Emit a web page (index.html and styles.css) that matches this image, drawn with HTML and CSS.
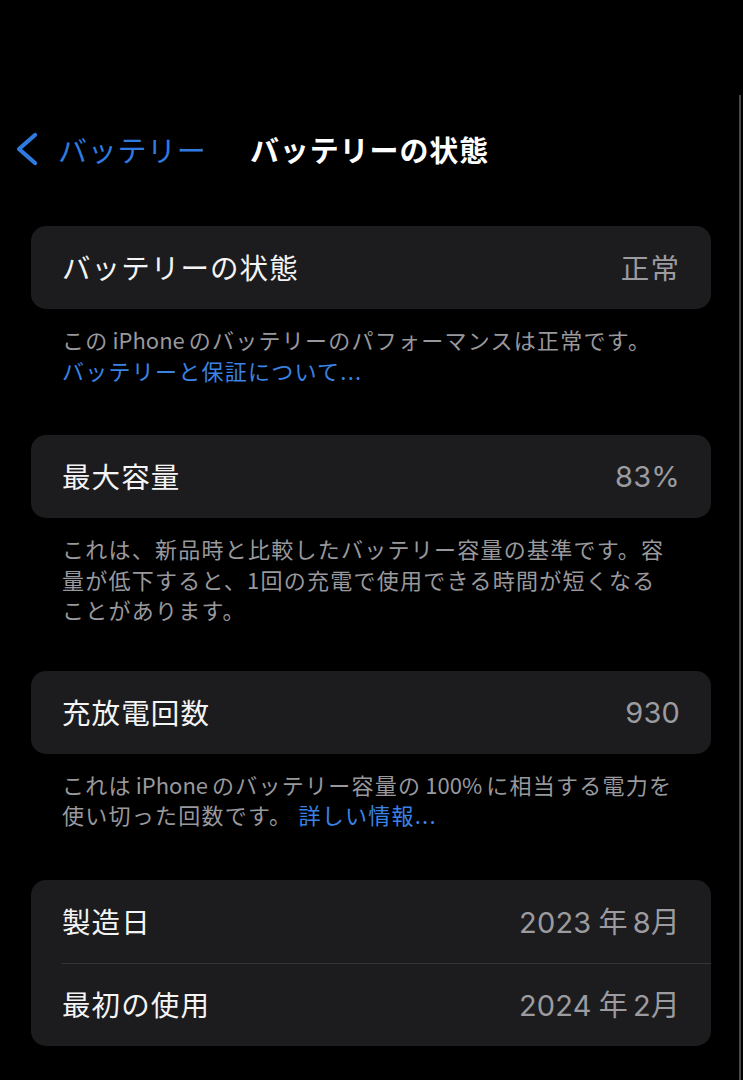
FILE: index.html
```html
<!DOCTYPE html>
<html lang="ja">
<head>
<meta charset="utf-8">
<title>バッテリーの状態</title>
<link rel="stylesheet" href="styles.css">
</head>
<body>
<div class="screen">
  <header class="nav">
    <a class="back" href="#">
      <svg class="chevron" width="26" height="34" viewBox="0 0 26 34" aria-hidden="true">
        <path d="M21 3 L5 17 L21 31" fill="none" stroke="currentColor" stroke-width="4.2" stroke-linecap="round" stroke-linejoin="round"/>
      </svg>
      <span class="back-label">バッテリー</span>
    </a>
    <h1 class="nav-title">バッテリーの状態</h1>
    <span class="nav-spacer"></span>
  </header>

  <main class="content">
    <section class="group">
      <div class="card">
        <div class="row"><span class="label">バッテリーの状態</span><span class="value">正常</span></div>
      </div>
      <p class="footer">この<span class="latin">iPhone</span>のバッテリーのパフォーマンスは正常です。<br><a class="link" href="#">バッテリーと保証について...</a></p>
    </section>

    <section class="group">
      <div class="card">
        <div class="row"><span class="label">最大容量</span><span class="value num">83%</span></div>
      </div>
      <p class="footer">これは、新品時と比較したバッテリー容量の基準です。容<br>量が低下すると、1回の充電で使用できる時間が短くなる<br>ことがあります。</p>
    </section>

    <section class="group">
      <div class="card">
        <div class="row"><span class="label">充放電回数</span><span class="value num">930</span></div>
      </div>
      <p class="footer">これは<span class="latin">iPhone</span>のバッテリー容量の<span class="latin">100%</span>に相当する電力を<br>使い切った回数です。 <a class="link" href="#">詳しい情報...</a></p>
    </section>

    <section class="group">
      <div class="card">
        <div class="row"><span class="label">製造日</span><span class="value num">2023<span class="unit">年</span>8月</span></div>
        <div class="row divided"><span class="label">最初の使用</span><span class="value num">2024<span class="unit">年</span>2月</span></div>
      </div>
    </section>
  </main>
</div>
</body>
</html>
```

FILE: styles.css
```css
html, body {
  margin: 0;
  padding: 0;
  background: #000;
}

body {
  width: 743px;
  height: 1080px;
  overflow: hidden;
  font-family: "Noto Sans CJK JP", "Noto Sans", sans-serif;
  color: #f4f4f5;
  -webkit-font-smoothing: antialiased;
}

/* device frame edge on the right */
.screen {
  margin-top: 95px;
  width: 739px;
  height: 985px;
  border-right: 2px solid #48484b;
  padding-top: 26px;
  box-sizing: content-box;
}

/* navigation bar */
.nav {
  display: grid;
  grid-template-columns: 1fr auto 1fr;
  align-items: center;
  height: 56px;
}

.back {
  display: flex;
  align-items: center;
  color: #2f7be0;
  text-decoration: none;
  padding-left: 14px;
}

.chevron {
  display: block;
  flex: none;
}

.back-label {
  margin-left: 18px;
  font-size: 29px;
  letter-spacing: 0.7px;
  line-height: 1;
}

.nav-title {
  margin: 0;
  font-size: 29px;
  font-weight: 700;
  letter-spacing: 0.9px;
  line-height: 1;
  color: #fff;
  white-space: nowrap;
}

/* grouped list */
.content {
  padding: 49px 28px 0 31px;
}

.group {
  margin-bottom: 50px;
}

.group:nth-child(2) {
  margin-bottom: 46px;
}

.card {
  background: #1c1c1e;
  border-radius: 15px;
  overflow: hidden;
}

.row {
  display: flex;
  align-items: center;
  justify-content: space-between;
  height: 83px;
  padding: 0 31px;
  font-size: 28.5px;
  letter-spacing: 1.1px;
  line-height: 1;
}

.row.divided {
  box-shadow: inset 0 1px 0 #343437;
  margin-left: 31px;
  padding-left: 0;
}

.label {
  color: #f4f4f5;
}

.value {
  color: #9b9ba0;
}

.value.num {
  font-family: "Inter", "Noto Sans CJK JP", sans-serif;
  font-size: 29px;
  letter-spacing: 0.2px;
}

.unit {
  font-family: "Noto Sans CJK JP", sans-serif;
  margin: 0 5px 0 7px;
}

.footer {
  margin: 0;
  padding: 15px 8px 0 31px;
  font-size: 22px;
  letter-spacing: 1.25px;
  line-height: 30.5px;
  color: #98989d;
  white-space: nowrap;
}

.latin {
  margin: 0 4px;
  letter-spacing: 0;
}

.link {
  color: #3a83e4;
  text-decoration: none;
}
```
